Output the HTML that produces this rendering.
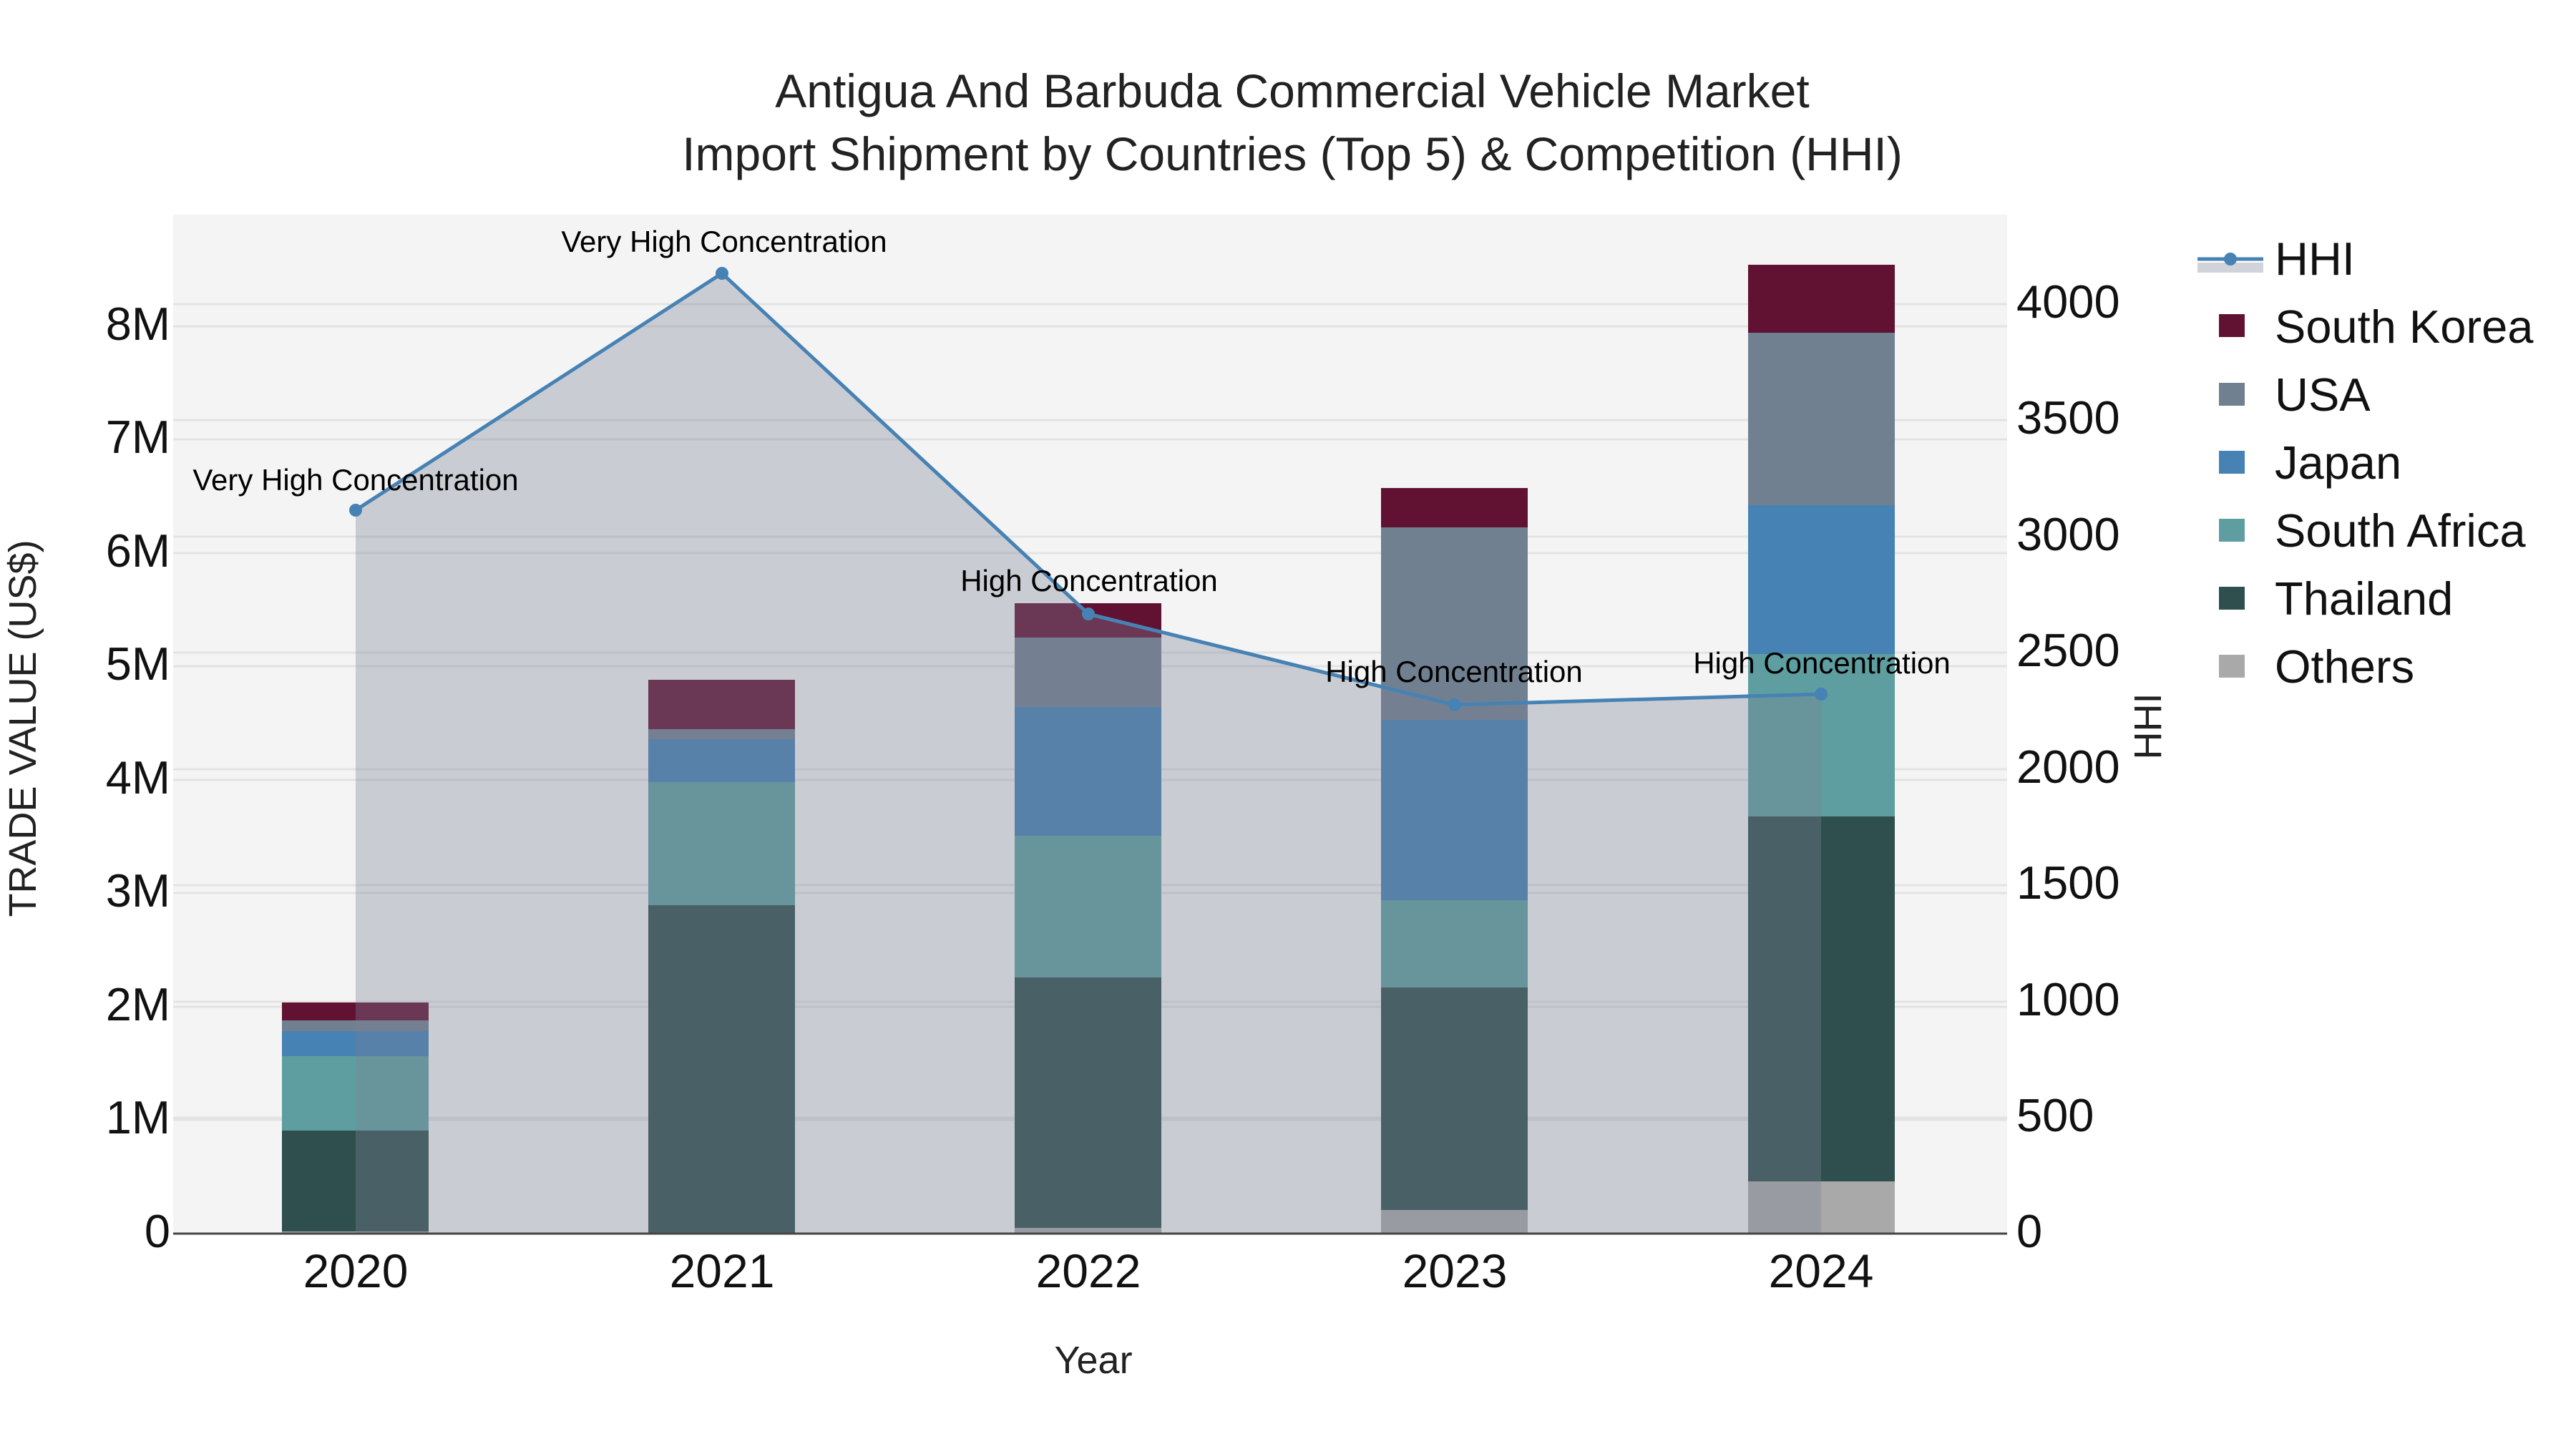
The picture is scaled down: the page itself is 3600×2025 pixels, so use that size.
<!DOCTYPE html>
<html><head><meta charset="utf-8"><style>html,body{margin:0;padding:0;background:#fff}svg{display:block}</style></head>
<body>
<svg width="3600" height="2025" viewBox="0 0 3600 2025" xmlns="http://www.w3.org/2000/svg" font-family="Liberation Sans, Arial, sans-serif">
<rect x="0" y="0" width="3600" height="2025" fill="#fff"/>
<rect x="242" y="300" width="2563" height="1424" fill="#f4f4f4"/>
<g stroke="#e3e3e3" stroke-width="3">
<line x1="242" x2="2805" y1="1565" y2="1565"/><line x1="242" x2="2805" y1="1407" y2="1407"/><line x1="242" x2="2805" y1="1248" y2="1248"/><line x1="242" x2="2805" y1="1090" y2="1090"/><line x1="242" x2="2805" y1="931" y2="931"/><line x1="242" x2="2805" y1="773" y2="773"/><line x1="242" x2="2805" y1="614" y2="614"/><line x1="242" x2="2805" y1="456" y2="456"/>
<line x1="242" x2="2805" y1="1562" y2="1562"/><line x1="242" x2="2805" y1="1400" y2="1400"/><line x1="242" x2="2805" y1="1237" y2="1237"/><line x1="242" x2="2805" y1="1075" y2="1075"/><line x1="242" x2="2805" y1="912" y2="912"/><line x1="242" x2="2805" y1="750" y2="750"/><line x1="242" x2="2805" y1="587" y2="587"/><line x1="242" x2="2805" y1="425" y2="425"/>
</g>
<g>
<rect x="394" y="1721" width="205" height="3" fill="#a9a9a9"/>
<rect x="394" y="1580" width="205" height="141" fill="#2f4f4f"/>
<rect x="394" y="1476" width="205" height="104" fill="#5f9ea0"/>
<rect x="394" y="1441" width="205" height="35" fill="#4682b4"/>
<rect x="394" y="1426" width="205" height="15" fill="#708090"/>
<rect x="394" y="1401" width="205" height="25" fill="#611232"/>
<rect x="906" y="1265" width="205" height="459" fill="#2f4f4f"/>
<rect x="906" y="1093" width="205" height="172" fill="#5f9ea0"/>
<rect x="906" y="1033" width="205" height="60" fill="#4682b4"/>
<rect x="906" y="1019" width="205" height="14" fill="#708090"/>
<rect x="906" y="950" width="205" height="69" fill="#611232"/>
<rect x="1418" y="1716" width="205" height="8" fill="#a9a9a9"/>
<rect x="1418" y="1366" width="205" height="350" fill="#2f4f4f"/>
<rect x="1418" y="1168" width="205" height="198" fill="#5f9ea0"/>
<rect x="1418" y="988" width="205" height="180" fill="#4682b4"/>
<rect x="1418" y="891" width="205" height="97" fill="#708090"/>
<rect x="1418" y="843" width="205" height="48" fill="#611232"/>
<rect x="1930" y="1691" width="205" height="33" fill="#a9a9a9"/>
<rect x="1930" y="1380" width="205" height="311" fill="#2f4f4f"/>
<rect x="1930" y="1258" width="205" height="122" fill="#5f9ea0"/>
<rect x="1930" y="1006" width="205" height="252" fill="#4682b4"/>
<rect x="1930" y="737" width="205" height="269" fill="#708090"/>
<rect x="1930" y="682" width="205" height="55" fill="#611232"/>
<rect x="2443" y="1651" width="205" height="73" fill="#a9a9a9"/>
<rect x="2443" y="1141" width="205" height="510" fill="#2f4f4f"/>
<rect x="2443" y="914" width="205" height="227" fill="#5f9ea0"/>
<rect x="2443" y="706" width="205" height="208" fill="#4682b4"/>
<rect x="2443" y="465" width="205" height="241" fill="#708090"/>
<rect x="2443" y="370" width="205" height="95" fill="#611232"/>
</g>
<polygon points="497,1724 497,713 1009,382 1521,858 2033,985 2545,970 2545,1724" fill="rgb(122,130,150)" fill-opacity="0.35"/>
<polyline points="497,713 1009,382 1521,858 2033,985 2545,970" fill="none" stroke="#4682b4" stroke-width="5"/>
<g fill="#4682b4"><circle cx="497" cy="713" r="9"/><circle cx="1009" cy="382" r="9"/><circle cx="1521" cy="858" r="9"/><circle cx="2033" cy="985" r="9"/><circle cx="2545" cy="970" r="9"/></g>
<line x1="242" x2="2805" y1="1724" y2="1724" stroke="#444" stroke-width="3"/>
<g font-size="42" fill="#000" text-anchor="middle" dominant-baseline="middle">
<text x="497" y="674">Very High Concentration</text>
<text x="1012" y="341">Very High Concentration</text>
<text x="1522" y="815">High Concentration</text>
<text x="2032" y="942">High Concentration</text>
<text x="2546" y="930">High Concentration</text>
</g>
<g font-size="66" fill="#222" text-anchor="middle">
<text x="1806" y="150">Antigua And Barbuda Commercial Vehicle Market</text>
<text x="1806" y="238">Import Shipment by Countries (Top 5) &amp; Competition (HHI)</text>
</g>
<g font-size="65" fill="#111" text-anchor="end" dominant-baseline="middle">
<text x="238" y="1726">0</text><text x="238" y="1567">1M</text><text x="238" y="1409">2M</text><text x="238" y="1250">3M</text><text x="238" y="1092">4M</text><text x="238" y="933">5M</text><text x="238" y="775">6M</text><text x="238" y="616">7M</text><text x="238" y="458">8M</text>
</g>
<g font-size="65" fill="#111" text-anchor="start" dominant-baseline="middle">
<text x="2818" y="1726">0</text><text x="2818" y="1564">500</text><text x="2818" y="1402">1000</text><text x="2818" y="1239">1500</text><text x="2818" y="1077">2000</text><text x="2818" y="914">2500</text><text x="2818" y="752">3000</text><text x="2818" y="589">3500</text><text x="2818" y="427">4000</text>
</g>
<g font-size="66" fill="#111" text-anchor="middle">
<text x="497" y="1799">2020</text><text x="1009" y="1799">2021</text><text x="1521" y="1799">2022</text><text x="2033" y="1799">2023</text><text x="2545" y="1799">2024</text>
</g>
<text x="1528" y="1919" font-size="54" fill="#222" text-anchor="middle">Year</text>
<text transform="translate(50,1018) rotate(-90)" font-size="54" fill="#222" text-anchor="middle">TRADE VALUE (US$)</text>
<text transform="translate(3020,1015) rotate(-90)" font-size="54" fill="#222" text-anchor="middle">HHI</text>
<g transform="translate(-16,0)">
<rect x="3087" y="367" width="92" height="14" fill="#d0d4da"/>
<line x1="3087" x2="3179" y1="362" y2="362" stroke="#4682b4" stroke-width="5"/>
<circle cx="3133" cy="362" r="9" fill="#4682b4"/>
<rect x="3117" y="439" width="36" height="32" fill="#611232"/>
<rect x="3117" y="535" width="36" height="32" fill="#708090"/>
<rect x="3117" y="630" width="36" height="32" fill="#4682b4"/>
<rect x="3117" y="725" width="36" height="32" fill="#5f9ea0"/>
<rect x="3117" y="820" width="36" height="32" fill="#2f4f4f"/>
<rect x="3117" y="915" width="36" height="32" fill="#a9a9a9"/>
<g font-size="65" fill="#111" dominant-baseline="middle">
<text x="3195" y="367">HHI</text>
<text x="3195" y="462">South Korea</text>
<text x="3195" y="557">USA</text>
<text x="3195" y="652">Japan</text>
<text x="3195" y="747">South Africa</text>
<text x="3195" y="842">Thailand</text>
<text x="3195" y="937">Others</text>
</g>
</g>
</svg>
</body></html>
